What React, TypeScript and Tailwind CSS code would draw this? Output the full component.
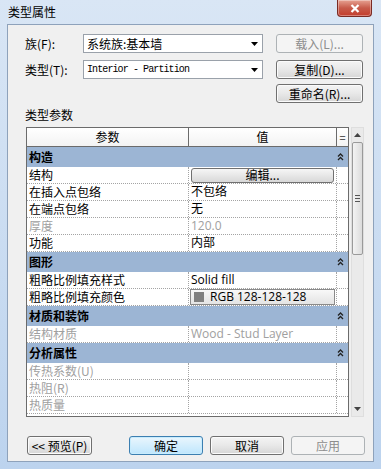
import React from "react";

const cjk = "font-['Noto_Sans_CJK_SC','Noto_Sans',sans-serif]";

type Row = { k: string; v: string; kind?: "edit" | "rgb"; gray?: boolean };
const groups: { name: string; rows: Row[] }[] = [
  {
    name: "构造",
    rows: [
      { k: "结构", v: "编辑...", kind: "edit" },
      { k: "在插入点包络", v: "不包络" },
      { k: "在端点包络", v: "无" },
      { k: "厚度", v: "120.0", gray: true },
      { k: "功能", v: "内部" },
    ],
  },
  {
    name: "图形",
    rows: [
      { k: "粗略比例填充样式", v: "Solid fill" },
      { k: "粗略比例填充颜色", v: "RGB 128-128-128", kind: "rgb" },
    ],
  },
  { name: "材质和装饰", rows: [{ k: "结构材质", v: "Wood - Stud Layer", gray: true }] },
  {
    name: "分析属性",
    rows: [
      { k: "传热系数(U)", v: "", gray: true },
      { k: "热阻(R)", v: "", gray: true },
      { k: "热质量", v: "", gray: true },
    ],
  },
];

function Btn({
  children,
  w,
  disabled,
  primary,
}: {
  children: React.ReactNode;
  w: string;
  disabled?: boolean;
  primary?: boolean;
}) {
  const base =
    "h-[19px] rounded-[3px] border flex items-center justify-center text-[12px] leading-none " + w + " ";
  if (disabled)
    return (
      <div className={base + "border-[#adb2b5] bg-[#f4f4f4] text-[#8d8d8d]"}>{children}</div>
    );
  if (primary)
    return (
      <div
        className={
          base +
          "border-[#3c7fb1] bg-gradient-to-b from-[#eaf6fd] to-[#bee6fd] text-black shadow-[inset_0_0_0_1px_#c8ecfd]"
        }
      >
        {children}
      </div>
    );
  return (
    <div
      className={
        base +
        "border-[#707070] bg-gradient-to-b from-[#f4f4f4] via-[#e8e8e8] to-[#d6d6d6] text-black shadow-[inset_0_0_0_1px_#fbfbfb]"
      }
    >
      {children}
    </div>
  );
}

function Combo({ text, mono }: { text: string; mono?: boolean }) {
  return (
    <div className="w-[180px] h-[19px] border border-[#9aa1aa] bg-white flex items-center pl-[3px] pr-[4px]">
      <span
        className={
          "flex-1 text-black " +
          (mono
            ? "font-['Liberation_Mono',monospace] text-[10px] tracking-[-0.9px]"
            : "text-[12px]")
        }
      >
        {text}
      </span>
      <svg width="7" height="4" viewBox="0 0 7 4">
        <path d="M0 0H7L3.5 4Z" fill="#000" />
      </svg>
    </div>
  );
}

function Chev() {
  return (
    <svg width="7" height="8" viewBox="0 0 7 8">
      <path d="M1 3.5L3.5 1L6 3.5M1 7L3.5 4.5L6 7" stroke="#222" strokeWidth="1.3" fill="none" />
    </svg>
  );
}

export default function App() {
  return (
    <div
      className={
        "w-[381px] h-[469px] relative overflow-hidden bg-gradient-to-b from-[#d9e6f5] to-[#bcd3ee] flex flex-col " +
        cjk
      }
    >
      {/* title bar */}
      <div className="h-[24px] flex items-start pl-[8px] pt-[4px]">
        <span className="text-[12px] leading-[15px] text-black">类型属性</span>
      </div>
      <div className="absolute right-[9px] top-0 w-[35px] h-[17px] rounded-b-[4px] border border-[#7a2b24] border-t-0 bg-gradient-to-b from-[#e6a192] via-[#c75a4a] to-[#c33c2c] flex items-center justify-center shadow-[inset_0_0_0_1px_rgba(255,255,255,0.35)]">
        <svg width="10" height="9" viewBox="0 0 10 9">
          <path d="M1.5 1L8.5 8M8.5 1L1.5 8" stroke="#fff" strokeWidth="2.2" />
        </svg>
      </div>

      {/* client panel */}
      <div className="mx-[7px] h-[438px] border border-[#8ea2bb] bg-[#f0f0f0] flex flex-col text-black">
        {/* row 1 */}
        <div className="flex items-center mt-[9px] pl-[17px]">
          <span className="w-[58px] text-[12px]">族(F):</span>
          <Combo text="系统族:基本墙" />
          <div className="w-[13px]" />
          <Btn w="w-[87px]" disabled>
            载入(L)...
          </Btn>
        </div>
        {/* row 2 */}
        <div className="flex items-center mt-[7px] pl-[17px]">
          <span className="w-[58px] text-[12px]">类型(T):</span>
          <Combo text="Interior - Partition" mono />
          <div className="w-[13px]" />
          <Btn w="w-[87px]">复制(D)...</Btn>
        </div>
        {/* row 3 */}
        <div className="flex items-center mt-[5px] pl-[268px]">
          <Btn w="w-[87px]">重命名(R)...</Btn>
        </div>
        <div className="pl-[17px] mt-[3px] h-[18px] text-[12px] leading-[18px]">类型参数</div>

        {/* table */}
        <div className="ml-[18px] mt-[3px] flex h-[290px]">
          <div className="w-[323px] h-full border border-[#6b6b6b] bg-white flex flex-col overflow-hidden">
            <div className="h-[19px] flex border-b border-[#6b6b6b] bg-gradient-to-b from-white to-[#f3f3f3] text-[12px] shrink-0">
              <div className="w-[162px] border-r border-[#6b6b6b] flex items-center justify-center">参数</div>
              <div className="w-[148px] border-r border-[#6b6b6b] flex items-center justify-center">值</div>
              <div className="flex-1 flex items-center justify-center text-[11px] text-[#333]">=</div>
            </div>
            {groups.map((g) => (
              <React.Fragment key={g.name}>
                <div className="h-[20px] shrink-0 bg-[#9cb5d4] flex items-center pl-[2px] pr-[4px] text-[12px] font-bold">
                  <span className="flex-1">{g.name}</span>
                  <Chev />
                </div>
                {g.rows.map((r) => (
                  <div
                    key={r.k}
                    className={
                      "h-[17px] shrink-0 flex border-b border-dotted border-[#a4a4a4] text-[12px] " +
                      (r.gray ? "text-[#a0a0a0]" : "text-black")
                    }
                  >
                    <div className="w-[162px] border-r border-dotted border-[#a4a4a4] pl-[2px] flex items-center whitespace-nowrap overflow-hidden">
                      {r.k}
                    </div>
                    <div className="w-[148px] border-r border-dotted border-[#a4a4a4] flex items-center">
                      {r.kind === "edit" ? (
                        <div className="mx-[2px] w-full h-[15px] rounded-[3px] border border-[#707070] bg-gradient-to-b from-[#f6f6f6] to-[#d8d8d8] flex items-center justify-center text-[12px] leading-none">
                          编辑...
                        </div>
                      ) : r.kind === "rgb" ? (
                        <div className="mx-[1px] w-full h-[16px] border border-[#8a8a8a] bg-gradient-to-b from-[#f8f8f8] to-[#e4e4e4] flex items-center pl-[3px] font-['Open_Sans','Noto_Sans',sans-serif] text-[12px]">
                          <span className="w-[10px] h-[10px] bg-[#808080] mr-[6px]" />
                          {r.v}
                        </div>
                      ) : (
                        <span className="pl-[2px] font-['Open_Sans','Noto_Sans_CJK_SC',sans-serif]">{r.v}</span>
                      )}
                    </div>
                    <div className="flex-1" />
                  </div>
                ))}
              </React.Fragment>
            ))}
          </div>
          {/* scrollbar */}
          <div className="ml-[2px] w-[13px] h-full bg-[#eaeaea] border border-[#dedede] flex flex-col items-center">
            <div className="h-[14px] w-full flex items-center justify-center">
              <svg width="7" height="4" viewBox="0 0 7 4">
                <path d="M0 4H7L3.5 0Z" fill="#444" />
              </svg>
            </div>
            <div className="w-[11px] h-[113px] rounded-[2px] border border-[#9a9a9a] bg-gradient-to-r from-[#f3f3f3] to-[#dcdcdc] flex flex-col items-center justify-center gap-[2px]">
              <div className="w-[5px] h-[1px] bg-[#555]" />
              <div className="w-[5px] h-[1px] bg-[#555]" />
              <div className="w-[5px] h-[1px] bg-[#555]" />
            </div>
            <div className="flex-1" />
            <div className="h-[14px] w-full flex items-center justify-center">
              <svg width="7" height="4" viewBox="0 0 7 4">
                <path d="M0 0H7L3.5 4Z" fill="#444" />
              </svg>
            </div>
          </div>
        </div>

        {/* bottom buttons */}
        <div className="flex items-center mt-[19px] pl-[19px]">
          <Btn w="w-[65px]">{"<< 预览(P)"}</Btn>
          <div className="w-[37px]" />
          <Btn w="w-[74px]" primary>
            确定
          </Btn>
          <div className="w-[7px]" />
          <Btn w="w-[74px]">取消</Btn>
          <div className="w-[7px]" />
          <Btn w="w-[74px]" disabled>
            应用
          </Btn>
        </div>
      </div>
    </div>
  );
}
